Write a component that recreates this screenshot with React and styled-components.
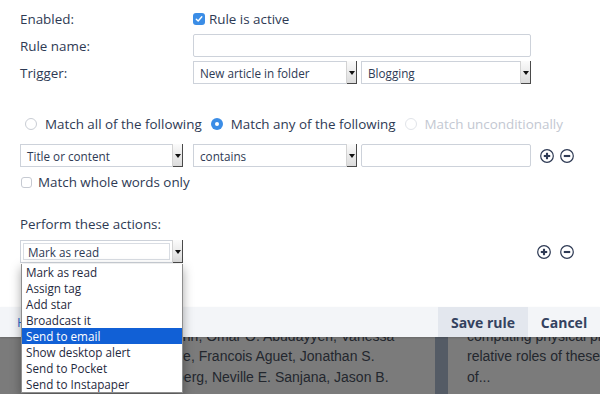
import React from 'react';
import styled, { createGlobalStyle } from 'styled-components';

const GlobalStyle = createGlobalStyle`
  html, body { margin: 0; padding: 0; }
  body {
    width: 600px;
    height: 394px;
    overflow: hidden;
    font-family: "Open Sans", "Noto Sans", sans-serif;
    color: #2e3a54;
  }
`;

const ink = '#2e3a54';
const blue = '#3b8de6';

const Page = styled.div`
  position: relative;
  width: 600px;
  height: 394px;
  overflow: hidden;
  background: #7b7b7b;
  display: grid;
  grid-template-columns: 435px 13px 1fr;
`;

const ArticleText = styled.div`
  padding: 305px 0 0 ${p => p.$left}px;
  font-family: "Liberation Sans", Arial, sans-serif;
  font-size: 14px;
  line-height: 20.6px;
  color: #23272e;
  white-space: nowrap;
  overflow: hidden;
`;

const Divider = styled.div`
  background: #545b65;
`;

const Dialog = styled.div`
  position: absolute;
  top: 0;
  left: 0;
  right: 0;
  display: flex;
  flex-direction: column;
`;

const Form = styled.div`
  height: 307px;
  box-sizing: border-box;
  background: #fff;
  padding: 7px 20px 0;
  font-size: 13.4px;
`;

const FieldRow = styled.div`
  display: flex;
  align-items: center;
  gap: 4px;
  height: 23px;
  margin-bottom: ${p => p.$mb ?? 4}px;
`;

const Label = styled.div`
  width: 169px;
  color: ${ink};
`;

const InlineLabel = styled.label`
  display: flex;
  align-items: center;
  gap: ${p => p.$gap ?? 4}px;
  color: ${p => (p.$disabled ? '#c3c8d2' : ink)};
`;

const Checkbox = styled.span`
  width: ${p => (p.$checked ? 12 : 11)}px;
  height: ${p => (p.$checked ? 12 : 11)}px;
  box-sizing: border-box;
  border-radius: 3px;
  background: ${p => (p.$checked ? blue : '#fff')};
  border: ${p => (p.$checked ? 'none' : '1px solid #c6cad2')};
  display: flex;
  align-items: center;
  justify-content: center;
`;

const Radio = styled.span`
  width: 12px;
  height: 12px;
  box-sizing: border-box;
  border-radius: 50%;
  background: ${p => (p.$checked ? blue : '#fff')};
  border: ${p => (p.$checked ? 'none' : `1px solid ${p.$disabled ? '#e1e4e9' : '#c9cdd4'}`)};
  display: flex;
  align-items: center;
  justify-content: center;

  &::after {
    content: '';
    display: ${p => (p.$checked ? 'block' : 'none')};
    width: 4px;
    height: 4px;
    border-radius: 50%;
    background: #fff;
  }
`;

const TextInput = styled.div`
  width: ${p => p.$w}px;
  height: 23px;
  box-sizing: border-box;
  border: 1px solid #cdd2da;
  border-radius: 2px;
  background: #fff;
`;

const SelectBox = styled.div`
  position: relative;
  width: ${p => p.$w}px;
  height: 23px;
  box-sizing: border-box;
  border: 1px solid #cdd2da;
  background: #fff;
  display: flex;
  align-items: stretch;
  font-size: 11.7px;
  color: ${ink};
`;

const SelectText = styled.div`
  flex: 1;
  display: flex;
  align-items: center;
  padding-left: ${p => (p.$open ? 4 : 6)}px;
  margin: ${p => (p.$open ? '2px' : '0')};
  border: ${p => (p.$open ? '1px solid #d9dde3' : 'none')};
`;

const Arrow = styled.div`
  width: 11px;
  box-sizing: border-box;
  margin: -1px -1px -1px 0;
  border-left: 1px solid #d3d3d3;
  background: linear-gradient(#fbfbfb, #dadada);
  box-shadow: inset -1px -1px 0 #4a4a4a;
  display: flex;
  align-items: center;
  justify-content: center;

  &::after {
    content: '';
    border-left: 3px solid transparent;
    border-right: 3px solid transparent;
    border-top: 4px solid #111;
    margin-right: 1px;
  }
`;

const RadioRow = styled.div`
  display: flex;
  align-items: center;
  gap: 9px;
  height: 20px;
  margin: 30px 0 10px 5px;
`;

const Row = styled.div`
  display: flex;
  align-items: center;
  height: 23px;
  gap: ${p => p.$gap}px;
`;

const Icons = styled.div`
  display: flex;
  align-items: center;
  gap: ${p => p.$gap}px;
  margin-left: ${p => p.$ml};
  padding-right: ${p => p.$pr ?? 0}px;
`;

const CheckRow = styled.div`
  display: flex;
  margin: 8px 0 0 1px;
  height: 14px;
  align-items: center;
`;

const SectionTitle = styled.div`
  margin: 26px 0 7px;
  height: 18px;
  line-height: 18px;
  color: ${ink};
`;

const DropWrap = styled.div`
  position: relative;
`;

const DropList = styled.ul`
  position: absolute;
  top: 24px;
  left: 1px;
  width: 162px;
  margin: 0;
  padding: 0;
  list-style: none;
  background: #fff;
  border: 1px solid #8e8e8e;
  border-top: none;
  box-sizing: border-box;
  box-shadow: 0 4px 10px rgba(0, 0, 0, 0.35);
  font-size: 11.7px;
  z-index: 5;
`;

const DropItem = styled.li`
  height: 16px;
  line-height: 16px;
  padding-left: 4px;
  color: ${p => (p.$active ? '#fff' : '#1f2a40')};
  background: ${p => (p.$active ? '#1160d6' : 'transparent')};
`;

const Footer = styled.div`
  height: 30px;
  background: #f3f5f8;
  display: flex;
  align-items: stretch;
  justify-content: space-between;
  box-shadow: 0 1px 2px rgba(0, 0, 0, 0.15);
`;

const HelpLink = styled.a`
  padding-left: 17px;
  display: flex;
  align-items: center;
  color: #2a6bd1;
  font-size: 13px;
  text-decoration: none;
`;

const Buttons = styled.div`
  display: flex;
`;

const Button = styled.button`
  border: none;
  margin: 0;
  width: ${p => p.$w}px;
  background: ${p => (p.$primary ? '#e3e7ee' : 'transparent')};
  font-family: "Open Sans", sans-serif;
  font-weight: 700;
  font-size: 14px;
  color: #34425f;
  padding: 0;
`;

function CheckMark() {
  return (
    <svg width="8" height="8" viewBox="0 0 8 8">
      <path d="M1.3 4.2 L3.2 6 L6.8 1.8" fill="none" stroke="#fff" strokeWidth="1.4" strokeLinecap="round" strokeLinejoin="round" />
    </svg>
  );
}

function CircleIcon({ plus }) {
  return (
    <svg width="14" height="14" viewBox="0 0 14 14">
      <circle cx="7" cy="7" r="6.3" fill="none" stroke={ink} strokeWidth="1.2" />
      <path d="M3.8 7 H10.2" stroke={ink} strokeWidth="2.1" />
      {plus && <path d="M7 3.8 V10.2" stroke={ink} strokeWidth="2.1" />}
    </svg>
  );
}

function Select({ w, value, open }) {
  return (
    <SelectBox $w={w}>
      <SelectText $open={open}>{value}</SelectText>
      <Arrow />
    </SelectBox>
  );
}

const actions = [
  'Mark as read',
  'Assign tag',
  'Add star',
  'Broadcast it',
  'Send to email',
  'Show desktop alert',
  'Send to Pocket',
  'Send to Instapaper',
];

export default function App() {
  return (
    <>
      <GlobalStyle />
      <Page>
        <ArticleText $left={22}>
          <div>Silvana Konermann, Mark D. Brigham, Alexandra</div>
          <div>Lila Wu, Silvana Konermann, Omar O. Abudayyeh, Vanessa</div>
          <div>Alexandra Trevino, Li Lowe, Francois Aguet, Jonathan S.</div>
          <div>Julia Joung, Mark Rosenberg, Neville E. Sanjana, Jason B.</div>
        </ArticleText>
        <Divider />
        <ArticleText $left={19}>
          <div>and the sensitivity of the</div>
          <div>computing physical properties and</div>
          <div>relative roles of these factors in the</div>
          <div>of...</div>
        </ArticleText>

        <Dialog>
          <Form>
            <FieldRow>
              <Label>Enabled:</Label>
              <InlineLabel $gap={4}>
                <Checkbox $checked><CheckMark /></Checkbox>
                Rule is active
              </InlineLabel>
            </FieldRow>
            <FieldRow>
              <Label>Rule name:</Label>
              <TextInput $w={338} />
            </FieldRow>
            <FieldRow $mb={0}>
              <Label>Trigger:</Label>
              <Select w={164} value="New article in folder" />
              <Select w={170} value="Blogging" />
            </FieldRow>

            <RadioRow>
              <InlineLabel $gap={8}><Radio />Match all of the following</InlineLabel>
              <InlineLabel $gap={8}><Radio $checked />Match any of the following</InlineLabel>
              <InlineLabel $gap={8} $disabled><Radio $disabled />Match unconditionally</InlineLabel>
            </RadioRow>

            <Row $gap={0}>
              <Select w={163} value="Title or content" />
              <Row $gap={4} style={{ marginLeft: 10 }}>
                <Select w={164} value="contains" />
                <TextInput $w={170} />
              </Row>
              <Icons $gap={6} $ml="9px">
                <CircleIcon plus />
                <CircleIcon />
              </Icons>
            </Row>

            <CheckRow>
              <InlineLabel $gap={6}><Checkbox />Match whole words only</InlineLabel>
            </CheckRow>

            <SectionTitle>Perform these actions:</SectionTitle>

            <Row $gap={0}>
              <DropWrap>
                <Select w={163} value="Mark as read" open />
                <DropList>
                  {actions.map(a => (
                    <DropItem key={a} $active={a === 'Send to email'}>{a}</DropItem>
                  ))}
                </DropList>
              </DropWrap>
              <Icons $gap={9} $ml="auto" $pr={6}>
                <CircleIcon plus />
                <CircleIcon />
              </Icons>
            </Row>
          </Form>
          <Footer>
            <HelpLink href="#">Help</HelpLink>
            <Buttons>
              <Button $primary $w={90}>Save rule</Button>
              <Button $w={72}>Cancel</Button>
            </Buttons>
          </Footer>
        </Dialog>
      </Page>
    </>
  );
}
